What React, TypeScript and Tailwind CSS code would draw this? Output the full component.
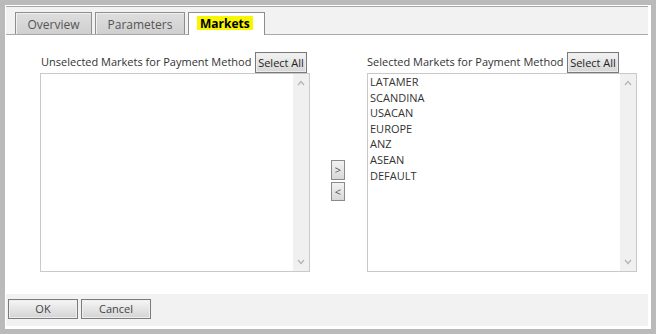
import React from "react";

const font = { fontFamily: '"Open Sans", "Liberation Sans", sans-serif' };

function ListBox({ items }: { items: string[] }) {
  return (
    <div className="relative h-[199px] w-[270px] border border-[#c9c9c9] bg-white">
      <div className="pl-[2px] pt-0 text-[11px] leading-[15.6px] text-[#333]">
        {items.map((it) => (
          <div key={it}>{it}</div>
        ))}
      </div>
      <div className="absolute right-0 top-0 bottom-0 w-[16px] bg-[#f0f0f0] flex flex-col items-center justify-between py-[6px]">
        <svg width="8" height="6" viewBox="0 0 8 6">
          <path d="M1 5 L4 1.5 L7 5" fill="none" stroke="#b4b4b4" strokeWidth="1.2" />
        </svg>
        <svg width="8" height="6" viewBox="0 0 8 6">
          <path d="M1 1 L4 4.5 L7 1" fill="none" stroke="#b4b4b4" strokeWidth="1.2" />
        </svg>
      </div>
    </div>
  );
}

function SelectAll() {
  return (
    <button className="h-[21px] w-[52px] border border-[#7a7a7a] bg-gradient-to-b from-[#f4f4f4] to-[#d6d6d6] text-[11px] leading-[18px] text-[#222] shadow-[inset_0_0_0_1px_#ececec]">
      Select All
    </button>
  );
}

export default function App() {
  return (
    <div className="h-[334px] w-[656px] bg-[#bababa] p-[5px]" style={font}>
      <div className="flex h-full flex-col bg-white pl-px pr-[3px] pt-px pb-[3px]">
        {/* Tab bar */}
        <div className="relative flex h-[29px] items-end gap-[3px] border-y border-[#a8a8a8] bg-[#f2f2f2] pl-[9px]">
          <div className="flex h-[22px] w-[77px] items-center justify-center border border-b-0 border-[#8e8e8e] bg-gradient-to-b from-[#dedede] to-[#cfcfcf] pt-[3px] text-[12px] text-[#555] shadow-[inset_1px_1px_0_#f0f0f0]">
            Overview
          </div>
          <div className="flex h-[22px] w-[90px] items-center justify-center border border-b-0 border-[#8e8e8e] bg-gradient-to-b from-[#dedede] to-[#cfcfcf] pt-[3px] text-[12px] text-[#555] shadow-[inset_1px_1px_0_#f0f0f0]">
            Parameters
          </div>
          <div className="relative z-10 -mb-px flex h-[23px] w-[77px] items-start border border-b-0 border-[#8e8e8e] bg-white pl-[8px] pt-[3px]">
            <span className="h-[14px] bg-[#f7f700] px-[3px] text-[12px] font-bold leading-[15px] text-black">
              Markets
            </span>
          </div>
        </div>

        {/* Content */}
        <div className="flex flex-1 pl-[34px] pt-[17px]">
          <div className="flex w-[270px] flex-col">
            <div className="flex h-[21px] items-center justify-between pl-px pr-[3px]">
              <span className="text-[11px] text-[#333]">Unselected Markets for Payment Method</span>
              <SelectAll />
            </div>
            <ListBox items={[]} />
          </div>

          <div className="ml-[21px] mt-[108px] flex flex-col gap-[2px]">
            <button className="h-[20px] w-[14px] border border-[#8a8a8a] bg-gradient-to-b from-[#f2f2f2] to-[#d8d8d8] text-[11px] leading-[16px] text-[#555]">
              &gt;
            </button>
            <button className="h-[19px] w-[14px] border border-[#8a8a8a] bg-gradient-to-b from-[#f2f2f2] to-[#d8d8d8] text-[11px] leading-[16px] text-[#555]">
              &lt;
            </button>
          </div>

          <div className="ml-[22px] flex w-[270px] flex-col">
            <div className="flex h-[21px] items-center justify-between pr-[18px]">
              <span className="text-[11px] text-[#333]">Selected Markets for Payment Method</span>
              <SelectAll />
            </div>
            <ListBox items={["LATAMER", "SCANDINA", "USACAN", "EUROPE", "ANZ", "ASEAN", "DEFAULT"]} />
          </div>
        </div>

        {/* Footer */}
        <div className="flex h-[32px] gap-[3px] bg-[#f2f2f2] pl-[2px] pt-[5px]">
          <button className="h-[20px] w-[70px] border border-[#7c7c7c] bg-gradient-to-b from-[#f6f6f6] to-[#d4d4d4] text-[11px] leading-[18px] text-[#444] shadow-[inset_0_0_0_1px_#eeeeee]">
            OK
          </button>
          <button className="h-[20px] w-[70px] border border-[#7c7c7c] bg-gradient-to-b from-[#f6f6f6] to-[#d4d4d4] text-[11px] leading-[18px] text-[#444] shadow-[inset_0_0_0_1px_#eeeeee]">
            Cancel
          </button>
        </div>
      </div>
    </div>
  );
}
